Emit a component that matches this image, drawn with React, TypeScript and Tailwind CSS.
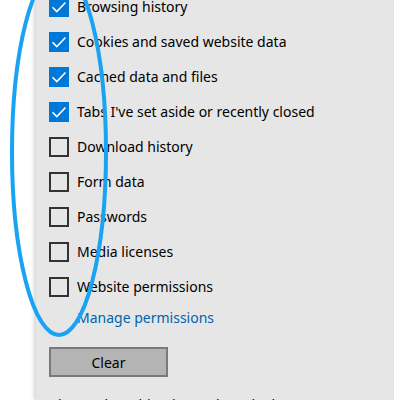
import React from "react";

const items: { label: string; checked: boolean }[] = [
  { label: "Browsing history", checked: true },
  { label: "Cookies and saved website data", checked: true },
  { label: "Cached data and files", checked: true },
  { label: "Tabs I've set aside or recently closed", checked: true },
  { label: "Download history", checked: false },
  { label: "Form data", checked: false },
  { label: "Passwords", checked: false },
  { label: "Media licenses", checked: false },
  { label: "Website permissions", checked: false },
];

function Box({ checked }: { checked: boolean }) {
  if (checked) {
    return (
      <div className="w-[20px] h-[20px] bg-[#0078d7] shrink-0">
        <svg width="20" height="20" viewBox="0 0 20 20">
          <path d="M3.5 10.2 L7.8 14.5 L16.5 5.5" fill="none" stroke="#fff" strokeWidth="1.6" />
        </svg>
      </div>
    );
  }
  return <div className="w-[20px] h-[20px] border-2 border-[#333333] shrink-0" />;
}

export default function App() {
  return (
    <div
      className="relative w-[394px] h-[400px] overflow-hidden bg-white flex"
      style={{ fontFamily: '"Segoe UI", "Noto Sans", "Open Sans", sans-serif' }}
    >
      <div className="w-[36px] shrink-0 bg-white" />
      <div className="flex-1 bg-[#e6e6e6] shadow-[-2px_0_4px_rgba(0,0,0,0.18)] pl-[13px]">
        <div className="mt-[-10px] flex flex-col">
          {items.map((it) => (
            <div key={it.label} className="h-[35px] flex items-start pt-[7px]">
              <Box checked={it.checked} />
              <span className="ml-[8px] text-[14px] leading-[19px] text-black whitespace-nowrap">
                {it.label}
              </span>
            </div>
          ))}
          <div className="h-[24px] flex items-center pl-[28px]">
            <span className="text-[14px] leading-[19px] text-[#0063b1] whitespace-nowrap">Manage permissions</span>
          </div>
          <button className="mt-[18px] w-[119px] h-[30px] bg-[#b4b4b4] border-2 border-[#7a7a7a] text-[14px] text-black flex items-center justify-center">
            Clear
          </button>
          <div className="mt-[18px] text-[14px] leading-[19px] text-black whitespace-nowrap">
            Always clear this when I close the browser
          </div>
        </div>
      </div>
      <svg className="absolute left-0 top-0 pointer-events-none" width="394" height="400">
        <ellipse cx="59" cy="152" rx="47" ry="183" fill="none" stroke="#1aa3f2" strokeWidth="4" />
      </svg>
    </div>
  );
}
